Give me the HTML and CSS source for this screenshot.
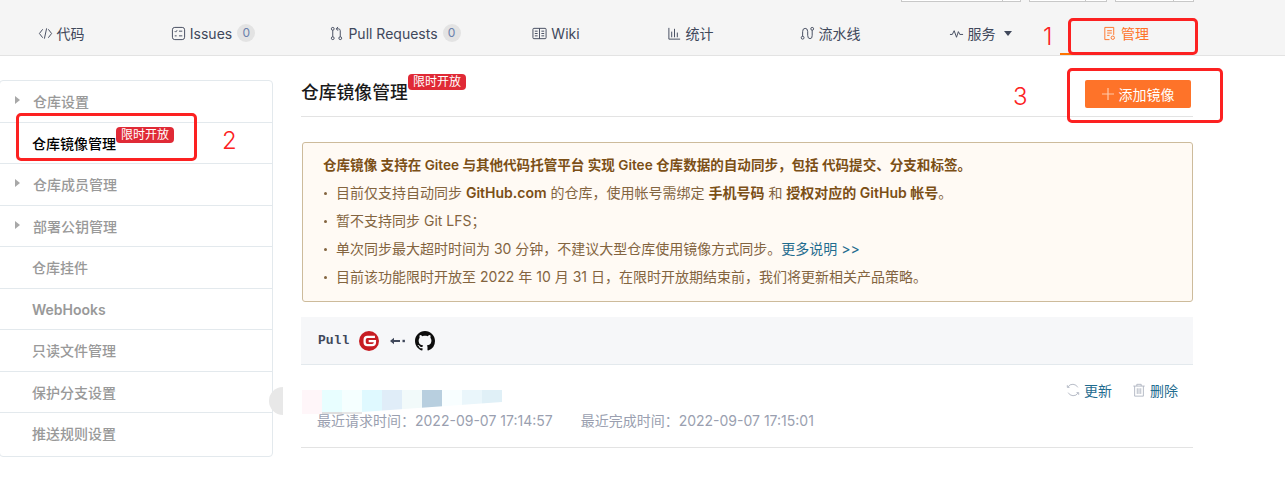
FILE: index.html
```html
<!DOCTYPE html>
<html lang="zh-CN">
<head>
  <meta charset="UTF-8">
  <meta name="viewport" content="width=device-width, initial-scale=1.0">
  <title>仓库镜像管理</title>
  <link rel="stylesheet" href="styles.css">
</head>
<body>
  <!-- Project header -->
  <div class="header">
    <div class="top-actions">
      <div class="top-btn top-btn-a"><span></span></div>
      <div class="top-btn top-btn-b"><span></span></div>
      <div class="top-btn top-btn-c"><span></span></div>
    </div>
    <div class="tabs">
      <a class="tab">
        <svg class="tab-icon" viewBox="0 0 16 16"><path d="M5 3.500 1.500 8 5 12.500M11 3.500 14.500 8 11 12.500M9.200 2.500 6.800 13.500"/></svg>
        代码
      </a>
      <a class="tab">
        <svg class="tab-icon" viewBox="0 0 16 16"><rect x="1.500" y="1.500" width="13" height="13" rx="2.500"/><path d="M8.500 5.500h3.500M8.500 10.500h3.500M4 5.500l1 1 1.500-2M4 10.500h2"/></svg>
        Issues <span class="count">0</span>
      </a>
      <a class="tab">
        <svg class="tab-icon" viewBox="0 0 16 16"><circle cx="4" cy="3" r="1.500"/><circle cx="4" cy="13" r="1.500"/><circle cx="12" cy="13" r="1.500"/><path d="M4 4.500v7M12 11.500V5q0-2-2-2H8M9.500 1 7.800 3l1.700 2"/></svg>
        Pull Requests <span class="count">0</span>
      </a>
      <a class="tab">
        <svg class="tab-icon" viewBox="0 0 16 16"><rect x="1" y="2.500" width="14" height="11" rx="1"/><path d="M8 2.500v11M3 5.500h3M3 8h3M3 10.500h3M10 5.500h3M10 8h3M10 10.500h3"/></svg>
        Wiki
      </a>
      <a class="tab">
        <svg class="tab-icon" viewBox="0 0 16 16"><path d="M2 2v12h12M5 6v6M8 3v9M11 7v5"/></svg>
        统计
      </a>
      <a class="tab">
        <svg class="tab-icon" viewBox="0 0 16 16"><circle cx="2.800" cy="12.500" r="1.500"/><circle cx="13" cy="3" r="1.500"/><path d="M2.800 11V6q0-3.500 2.700-3.500T8.200 6v4q0 3.500 2.500 3.500T13 10V4.500"/></svg>
        流水线
      </a>
      <a class="tab">
        <svg class="tab-icon" viewBox="0 0 16 16"><path d="M1 9h2.500L5.500 5 8 12l2-6 1.500 3H15"/></svg>
        服务 <i class="caret"></i>
      </a>
      <a class="tab tab-active">
        <svg class="tab-icon" viewBox="0 0 16 16"><path d="M8 14.500H3V1.500h9.500v8M5.500 5h5M5.500 7.500h5M5.500 10h2.500"/><circle cx="11.500" cy="12.500" r="1.800"/></svg>
        管理
      </a>
    </div>
  </div>

  <div class="content">
    <!-- Settings menu -->
    <div class="sidebar">
      <div class="menu-item has-arrow">仓库设置</div>
      <div class="menu-item menu-active">仓库镜像管理<span class="tag tag-menu">限时开放</span></div>
      <div class="menu-item has-arrow">仓库成员管理</div>
      <div class="menu-item has-arrow">部署公钥管理</div>
      <div class="menu-item">仓库挂件</div>
      <div class="menu-item menu-latin">WebHooks</div>
      <div class="menu-item">只读文件管理</div>
      <div class="menu-item">保护分支设置</div>
      <div class="menu-item menu-last">推送规则设置</div>
      <div class="collapse-handle"></div>
    </div>

    <div class="main">
      <div class="page-title">
        <h1>仓库镜像管理</h1>
        <span class="tag tag-title">限时开放</span>
        <button class="add-btn">
          <svg class="plus" viewBox="0 0 12 12"><path d="M6 0v12M0 6h12"/></svg>
          添加镜像
        </button>
      </div>

      <!-- Notice -->
      <div class="notice">
        <p class="notice-head">仓库镜像 支持在 Gitee 与其他代码托管平台 实现 Gitee 仓库数据的自动同步，包括 代码提交、分支和标签。</p>
        <ul>
          <li>目前仅支持自动同步 <b>GitHub.com</b> 的仓库，使用帐号需绑定 <b>手机号码</b> 和 <b>授权对应的 GitHub 帐号</b>。</li>
          <li>暂不支持同步 Git LFS；</li>
          <li>单次同步最大超时时间为 30 分钟，不建议大型仓库使用镜像方式同步。<a class="more">更多说明 &gt;&gt;</a></li>
          <li>目前该功能限时开放至 2022 年 10 月 31 日，在限时开放期结束前，我们将更新相关产品策略。</li>
        </ul>
      </div>

      <!-- Mirror list -->
      <div class="pull-bar">
        <span class="pull-label">Pull</span>
        <svg class="logo" viewBox="0 0 32 32"><circle cx="16" cy="16" r="16" fill="#c71d23"/><path d="M25.500 9.500H13.500a4.500 4.500 0 0 0-4.500 4.500v4a4.500 4.500 0 0 0 4.500 4.500h7.500a4.500 4.500 0 0 0 4.500-4.500v-2H15.500" fill="none" stroke="#fff" stroke-width="3.600"/></svg>
        <svg class="pull-arrow" viewBox="0 0 16 8"><path d="M0 4 4 .8v2.200h6v2H4v2.200z" fill="#40485b"/><rect x="12.500" y="2.800" width="2.400" height="2.400" fill="#40485b"/></svg>
        <svg class="logo" viewBox="0 0 16 16"><path fill="#0d0d0d" d="M8 0C3.580 0 0 3.580 0 8c0 3.540 2.290 6.530 5.470 7.590.4.07.55-.17.55-.38 0-.19-.01-.82-.01-1.490-2.010.37-2.530-.49-2.690-.94-.09-.23-.48-.94-.82-1.130-.28-.15-.68-.52-.01-.53.63-.01 1.080.58 1.230.82.72 1.210 1.870.87 2.330.66.07-.52.28-.87.51-1.070-1.780-.2-3.640-.89-3.640-3.950 0-.87.31-1.590.82-2.150-.08-.2-.36-1.020.08-2.120 0 0 .67-.21 2.200.82.64-.18 1.320-.27 2-.27.68 0 1.360.09 2 .27 1.530-1.040 2.200-.82 2.200-.82.44 1.100.16 1.920.08 2.120.51.56.82 1.270.82 2.150 0 3.070-1.870 3.750-3.650 3.950.29.25.54.73.54 1.480 0 1.070-.01 1.930-.01 2.200 0 .21.15.46.55.38A8.013 8.013 0 0016 8c0-4.420-3.580-8-8-8z"/></svg>
      </div>
      <div class="mirror-row">
        <div class="mirror-top">
          <div class="mosaic">
            <i class="m1"></i><i class="m2"></i><i class="m3"></i><i class="m4"></i><i class="m5"></i>
            <i class="m6"></i><i class="m7"></i><i class="m8"></i><i class="m9"></i><i class="m10"></i>
          </div>
          <div class="mirror-actions">
            <a class="action">
              <svg class="action-icon" viewBox="0 0 16 16"><path d="M13.500 5A6.500 6.500 0 0 0 2.200 4.500M2.500 11a6.500 6.500 0 0 0 11.300.5M1.500 2.500v2.500H4M14.500 13.500V11H12"/></svg>
              更新
            </a>
            <a class="action">
              <svg class="action-icon" viewBox="0 0 16 16"><path d="M1.500 3.500h13M5.500 3.500V1.500h5v2M3 3.500V15h10V3.500M6 6v6.500M8 6v6.500M10 6v6.500"/></svg>
              删除
            </a>
          </div>
        </div>
        <div class="mirror-times">
          <span>最近请求时间：2022-09-07 17:14:57</span>
          <span>最近完成时间：2022-09-07 17:15:01</span>
        </div>
      </div>
    </div>
  </div>

  <!-- Red annotations drawn on the screenshot -->
  <div class="mark mark-1"></div>
  <div class="mark mark-2"></div>
  <div class="mark mark-3"></div>
  <span class="mark-num num-1">1</span>
  <span class="mark-num num-2">2</span>
  <span class="mark-num num-3">3</span>
</body>
</html>
```

FILE: styles.css
```css
/* Gitee mirror settings page */
html, body {
  margin: 0;
  padding: 0;
  height: 497px;
  overflow: hidden;
}

body {
  position: relative;
  background-color: #ffffff;
  color: #40485b;
  font-family: 'Inter', 'Noto Sans CJK SC', sans-serif;
  font-size: 14px;
}

/* Header */
.header {
  height: 55px;
  background-color: #f5f5f5;
  border-bottom: 1px solid #e3e3e3;
}

.top-actions {
  display: flex;
  justify-content: flex-end;
  gap: 8px;
  height: 2px;
  padding-right: 91px;
}

.top-btn {
  display: flex;
  justify-content: flex-end;
  height: 1px;
  background-color: #ffffff;
  border: 1px solid #c8c8c8;
  border-top: none;
}

.top-btn span {
  display: block;
  border-left: 1px solid #c8c8c8;
}

.top-btn-a {
  width: 118px;
}

.top-btn-a span {
  width: 17px;
}

.top-btn-b {
  width: 76px;
}

.top-btn-b span {
  width: 20px;
}

.top-btn-c {
  width: 77px;
}

.top-btn-c span {
  width: 19px;
}

.tabs {
  display: grid;
  grid-template-columns: 122px 182px 182px 140px 128px 152px 148px 137px;
  height: 37px;
  margin-top: 16px;
}

.tab {
  display: flex;
  align-items: center;
  justify-content: center;
  gap: 4px;
  box-sizing: border-box;
  height: 37px;
  padding-bottom: 7px;
  font-size: 14px;
  color: #40485b;
  white-space: nowrap;
}

.tab-icon {
  width: 15px;
  height: 15px;
  fill: none;
  stroke: #40485b;
  stroke-width: 1;
}

.tab-active {
  margin-left: 6px;
  padding-bottom: 5px;
  border-bottom: 2px solid #fe7300;
  color: #fe7329;
}

.tab-active .tab-icon {
  stroke: #fe7329;
}

.count {
  display: inline-block;
  width: 18px;
  height: 18px;
  margin-left: 1px;
  border-radius: 50%;
  background-color: #e3e3e3;
  color: #6a80ac;
  font-size: 12px;
  line-height: 18px;
  text-align: center;
}

.caret {
  width: 0;
  height: 0;
  margin-left: 4px;
  border-left: 4.500px solid transparent;
  border-right: 4.500px solid transparent;
  border-top: 5px solid #40485b;
}

/* Layout */
.content {
  display: flex;
  gap: 28px;
  padding-top: 24px;
}

/* Settings menu */
.sidebar {
  position: relative;
  flex: none;
  width: 272px;
  height: 375px;
  margin-left: -1px;
  border: 1px solid #e3e9ed;
  border-radius: 4px;
}

.menu-item {
  position: relative;
  box-sizing: border-box;
  height: 41.500px;
  padding-left: 32px;
  border-bottom: 1px solid #e3e9ed;
  color: #999999;
  font-size: 14px;
  font-weight: 500;
  line-height: 41px;
}

.menu-last {
  border-bottom: none;
}

.has-arrow {
  padding-left: 33px;
}

.has-arrow::before {
  content: "";
  position: absolute;
  left: 15px;
  top: 15px;
  border-top: 4px solid transparent;
  border-bottom: 4px solid transparent;
  border-left: 5px solid #a8a8a8;
}

.menu-active {
  color: #000000;
}

.menu-latin {
  font-weight: 600;
}

.collapse-handle {
  position: absolute;
  top: 306px;
  left: 269px;
  width: 14px;
  height: 28px;
  border-radius: 14px 0 0 14px;
  background-color: #e8e8e8;
}

.tag {
  position: absolute;
  box-sizing: border-box;
  width: 58px;
  height: 16px;
  border-radius: 4px;
  background-color: #e02a36;
  color: #ffffff;
  font-size: 12px;
  font-weight: 400;
  line-height: 16px;
  text-align: center;
}

.tag-menu {
  left: 116px;
  top: 4px;
}

/* Main column */
.main {
  flex: none;
  width: 892px;
}

.page-title {
  position: relative;
  display: flex;
  align-items: flex-start;
  justify-content: space-between;
  box-sizing: border-box;
  height: 37px;
  border-bottom: 1px solid #e3e3e3;
}

.page-title h1 {
  margin: 0;
  color: #1a1a1a;
  font-size: 17.800px;
  font-weight: 500;
  line-height: 26px;
}

.tag-title {
  left: 107px;
  top: -6px;
}

.add-btn {
  display: flex;
  align-items: center;
  justify-content: center;
  gap: 5px;
  width: 106px;
  height: 28px;
  margin-right: 2px;
  padding: 0;
  border: none;
  border-radius: 2px;
  background-color: #fe7329;
  color: #ffffff;
  font-family: inherit;
  font-size: 14px;
}

.plus {
  width: 12px;
  height: 12px;
  fill: none;
  stroke: #ffc9a8;
  stroke-width: 1.200;
}

/* Notice */
.notice {
  box-sizing: border-box;
  height: 160px;
  margin: 25px 0 15px 1px;
  padding: 9px 20px 0;
  border: 1px solid #cdbb9b;
  border-radius: 3px;
  background-color: #fffaf4;
  color: #83643f;
  font-size: 14px;
  line-height: 28px;
}

.notice p {
  margin: 0;
  color: #7b4f16;
  font-size: 13.550px;
  font-weight: 600;
  line-height: 27px;
}

.notice ul {
  margin: 0;
  padding: 0;
  list-style: none;
}

.notice li {
  position: relative;
  padding-left: 13px;
}

.notice li::before {
  content: "";
  position: absolute;
  left: 1px;
  top: 13px;
  width: 3px;
  height: 3px;
  border-radius: 50%;
  background-color: #83643f;
}

.notice b {
  color: #7b4f16;
  font-weight: 600;
}

.more {
  color: #1f6c8f;
}

/* Mirror list */
.pull-bar {
  display: flex;
  align-items: center;
  box-sizing: border-box;
  height: 48px;
  padding-left: 17px;
  border-bottom: 1px solid #e3e9ed;
  background-color: #f6f7f9;
}

.pull-label {
  margin-right: 10px;
  color: #40485b;
  font-family: 'Liberation Mono', monospace;
  font-size: 13px;
  font-weight: 700;
}

.logo {
  width: 20px;
  height: 20px;
}

.pull-arrow {
  width: 16px;
  height: 8px;
  margin: 0 9px 0 11px;
}

.mirror-row {
  box-sizing: border-box;
  height: 83px;
  padding-top: 25px;
  border-bottom: 1px solid #e3e3e3;
}

.mirror-top {
  display: flex;
  justify-content: space-between;
  height: 22px;
}

.mosaic {
  display: flex;
  height: 24px;
  margin-left: 1px;
  clip-path: polygon(0 0, 100% 0, 100% 12px, 60px 22px, 60px 24px, 0 24px);
}

.mosaic i {
  display: block;
  box-sizing: border-box;
  width: 20px;
  height: 24px;
}

.m1 { background-color: #fff6f9; }
.m2 { background-color: #e8feff; border-bottom: 2px solid #dedede; }
.m3 { background-color: #f5ffff; border-bottom: 2px solid #e6e6e6; }
.m4 { background-color: #dff9ff; }
.m5 { background-color: #e0edf8; }
.m6 { background-color: #f2fafa; }
.m7 { background-color: #b8cfdf; }
.m8 { background-color: #f8feff; }
.m9 { background-color: #eaf6fb; }
.m10 { background-color: #e0f0f7; }

.mirror-actions {
  display: flex;
  gap: 20px;
  margin-top: -10px;
  margin-right: 15px;
}

.action {
  display: flex;
  align-items: center;
  gap: 4px;
  height: 20px;
  color: #1f6c8f;
  font-size: 14px;
}

.action-icon {
  width: 14px;
  height: 14px;
  fill: none;
  stroke: #adb2bf;
  stroke-width: 1;
}

.mirror-times {
  display: flex;
  gap: 28px;
  padding: 0 0 0 16px;
  color: #9a9fb0;
  font-size: 14px;
  line-height: 18px;
}

/* Annotations */
.mark {
  position: absolute;
  box-sizing: border-box;
  border: 3px solid #fc2121;
  border-radius: 5px;
}

.mark-1 {
  left: 1068px;
  top: 18px;
  width: 130px;
  height: 37px;
}

.mark-2 {
  left: 16px;
  top: 113px;
  width: 181px;
  height: 48px;
}

.mark-3 {
  left: 1067px;
  top: 68px;
  width: 156px;
  height: 55px;
}

.mark-num {
  position: absolute;
  color: #fc2121;
  font-family: 'Inter', sans-serif;
  font-size: 24px;
  font-weight: 300;
  line-height: 28px;
}

.num-1 {
  left: 1043px;
  top: 23px;
}

.num-2 {
  left: 222px;
  top: 127px;
}

.num-3 {
  left: 1013px;
  top: 83px;
}
```
